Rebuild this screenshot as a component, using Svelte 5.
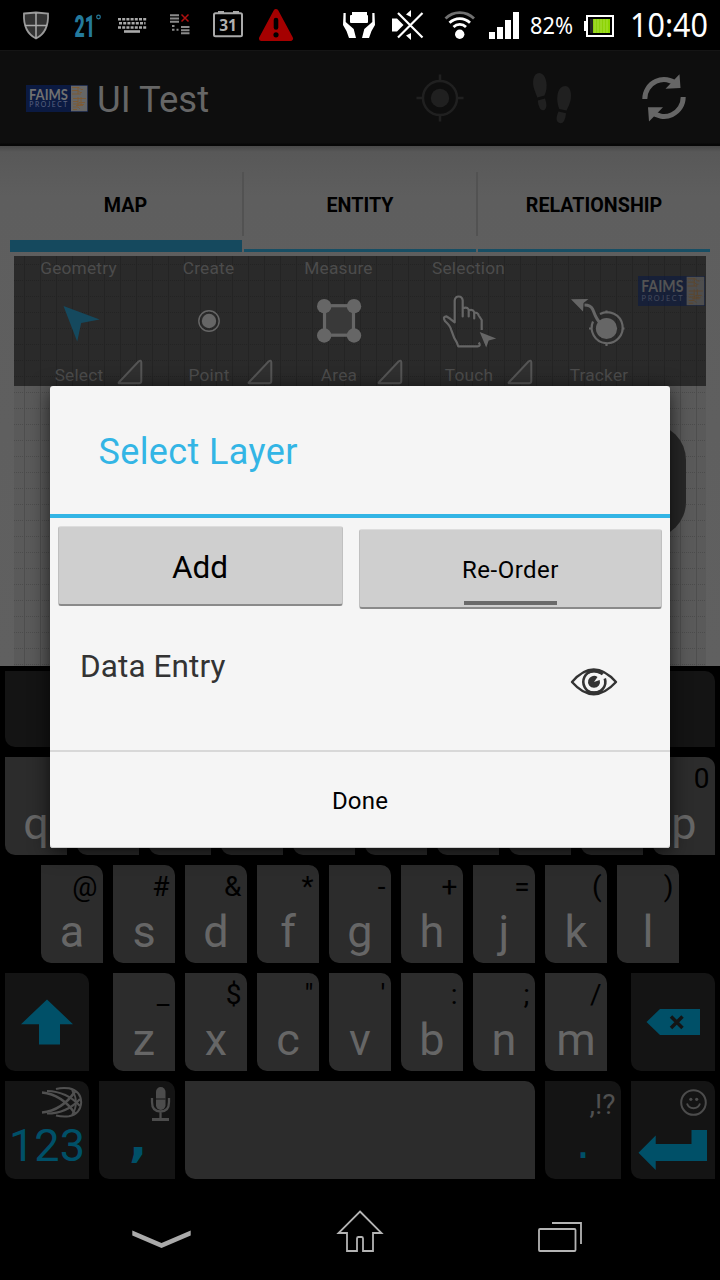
<script>
  const tabs = ['MAP', 'ENTITY', 'RELATIONSHIP'];
  const tools = [
    { top: 'Geometry', label: 'Select', icon: 'select', more: true },
    { top: 'Create', label: 'Point', icon: 'point', more: true },
    { top: 'Measure', label: 'Area', icon: 'area', more: true },
    { top: 'Selection', label: 'Touch', icon: 'touch', more: true },
    { top: '', label: 'Tracker', icon: 'tracker', more: false }
  ];
  const pair = (letters, hints) => [...letters].map((k, i) => ({ k, h: hints[i] }));
  // The dialog covers the middle of the first row.
  const row1 = pair('q    y   p', '         0');
  const row2 = pair('asdfghjkl', '@#&*-+=()');
  const row3 = pair('zxcvbnm', '_$"\':;/');
</script>

{#snippet logo(w, h)}
  <svg class="logo" width={w} height={h} viewBox="0 0 62 27" preserveAspectRatio="none">
    <rect width="62" height="27" fill="#0b1a42" />
    <rect x="45" y="0.7" width="16.3" height="25.6" fill="#666" />
    <text class="mark" x="3" y="14.8" font-size="15.5" font-weight="700" fill="#707070" textLength="39" lengthAdjust="spacingAndGlyphs">FAIMS</text>
    <text class="mark" x="3.3" y="22.3" font-size="6.8" fill="#5a6280" textLength="38" lengthAdjust="spacing">PROJECT</text>
    <g fill="none" stroke="#80582c" stroke-width="0.8">
      <path d="M46 2.5h7l2 2h2M46 5.5h6l2 2h2M46 9h9M52 2v7M47 13.5h13M52 12v9M55 12v5M47 16.5h5M47 19h9M47 22h5l2 2M47 24.500h4" />
      <path d="M54 19.500h4M53 17.500h6M50 20.500h7" />
    </g>
  </svg>
{/snippet}

{#snippet key(item)}
  <div class="key"><span class="hint">{item.h}</span><span class="letter">{item.k}</span></div>
{/snippet}

<div class="screen">
  <div class="status">
    <svg width="62" height="50" viewBox="0 0 62 50">
      <path d="M24 13.500Q31 13 36 12.500Q42 13 48 13.500Q49 32 36 38.500Q23 32 24 13.500Z" fill="#333" stroke="#9a9a9a" stroke-width="1.8" />
      <path d="M36 13v25M25 25.500h22" stroke="#aaa" stroke-width="1.500" />
    </svg>
    <svg width="48" height="50" viewBox="62 0 48 50">
      <text x="74.500" y="36.800" font-size="30.500" font-weight="900" fill="#247a9c" textLength="20.500" lengthAdjust="spacingAndGlyphs">21</text>
      <circle cx="98.500" cy="17" r="1.800" fill="none" stroke="#247a9c" stroke-width="1.200" />
    </svg>
    <svg width="46" height="50" viewBox="110 0 46 50">
      <g stroke="#aaa" stroke-width="2.600" stroke-dasharray="3 1.200">
        <path d="M118 19.200h28.300M119 23.300h26.500M118 27.500h28.300" />
      </g>
      <path d="M124 31.500h16" stroke="#aaa" stroke-width="2.600" />
    </svg>
    <svg width="44" height="50" viewBox="156 0 44 50">
      <path d="M170 15.200h9M170 18.500h9M170 21.800h9M181 27h8.500M181 30.200h8.500M181 33.300h8.500" stroke="#8a8a8a" stroke-width="2.100" />
      <path d="M172 26h2.500M172 29.700h2.500M176.500 29.700h2" stroke="#8a8a8a" stroke-width="2" />
      <path d="M181.500 14.500l7 7M188.500 14.500l-7 7" stroke="#b01010" stroke-width="1.500" />
    </svg>
    <svg width="52" height="50" viewBox="200 0 52 50">
      <rect x="214" y="13.300" width="28" height="23" rx="1.500" fill="none" stroke="#aaa" stroke-width="2" />
      <path d="M218 12h6M233 12h6" stroke="#aaa" stroke-width="1.800" />
      <text class="sony" x="228" y="31" text-anchor="middle" font-size="15.500" font-weight="700" fill="#b0b0b0">31</text>
    </svg>
    <svg width="78" height="50" viewBox="252 0 78 50">
      <path d="M276 11.500L290.500 38.500H261.500Z" fill="#a50000" stroke="#a50000" stroke-width="5" stroke-linejoin="round" />
      <path d="M276 20v7.500" stroke="#000" stroke-width="4.600" stroke-linecap="round" />
      <circle cx="276" cy="34.800" r="2.600" />
    </svg>
    <svg width="54" height="50" viewBox="330 0 54 50" fill="#fff">
      <path d="M343.500 13h2.200v9l8 7 2.300 9h-7l-2.500-7-3.500-6zM374.500 13h-2.200v9l-8 7-2.300 9h7l2.500-7 3.500-6z" />
      <rect x="350" y="15" width="18" height="8" rx="1" />
      <rect x="352" y="12" width="15" height="3" />
    </svg>
    <svg width="52" height="50" viewBox="384 0 52 50">
      <path d="M392 18.500h5v13h-5zM397 18.500l6.500 6.500-6.500 6.500zM406 14.500l5-4.500v7zM406 35.500l5 4.500v-7z" fill="#fff" />
      <path d="M399 13.500l23.500 23.500M422.500 13L398 37.500" stroke="#000" stroke-width="3.800" />
      <path d="M398 13l24.500 24.500M422.500 13L398 37.500" stroke="#fff" stroke-width="2.200" />
    </svg>
    <svg width="48" height="50" viewBox="436 0 48 50">
      <circle cx="459.700" cy="34.300" r="4.700" fill="#fff" />
      <g fill="none" stroke-width="2.700">
        <path d="M445.500 18.500a20 20 0 0 1 28.500 0" stroke="#707070" />
        <path d="M449.500 22.800a14.500 14.500 0 0 1 20.500 0M453.500 27a8.800 8.800 0 0 1 12.500 0" stroke="#fff" />
      </g>
    </svg>
    <svg width="44" height="50" viewBox="484 0 44 50" fill="#fff">
      <path d="M489 32h6v7h-6zM497 27h6v12h-6zM505 20h6v19h-6zM513 12h6v27h-6z" />
    </svg>
    <svg width="50" height="50" viewBox="528 0 50 50">
      <text class="sony" x="530" y="34" font-size="23" fill="#fff" textLength="43" lengthAdjust="spacingAndGlyphs">82%</text>
    </svg>
    <svg width="48" height="50" viewBox="578 0 48 50">
      <defs>
        <linearGradient id="charge"><stop offset="0" stop-color="#222" /><stop offset="0.15" stop-color="#222" /><stop offset="0.150" stop-color="#8ccc10" /><stop offset="1" stop-color="#8cd600" /></linearGradient>
      </defs>
      <rect x="587" y="16" width="26" height="20" fill="none" stroke="#fff" stroke-width="2" />
      <path d="M584 21h3v10h-3z" fill="#fff" />
      <rect x="590" y="19" width="20" height="14" fill="url(#charge)" />
      <path d="M595 19v14M598 19v14M601 19v14M604 19v14M607 19v14" stroke="#b8ea50" stroke-width=".7" />
    </svg>
    <svg width="94" height="50" viewBox="626 0 94 50">
      <text class="sony" x="630" y="37" font-size="32.500" fill="#fff" textLength="78" lengthAdjust="spacingAndGlyphs">10:40</text>
    </svg>
  </div>

  <header>
    {@render logo(62, 27)}
    <h1>UI Test</h1>
    <svg width="320" height="96" viewBox="400 50 320 96">
      <g fill="none" stroke="#202020" stroke-width="2.500">
        <circle cx="440" cy="98" r="17" />
        <path d="M440 74.500v7M440 114.500v7M416.500 98h7M456.500 98h7" />
      </g>
      <circle cx="440" cy="98" r="9.200" fill="#202020" />
      <g fill="#202020">
        <path d="M539 73C533.500 73 531.500 82 534.500 90Q536 94 537.300 97.500L544.500 95.500Q547.500 89 546.300 82C545.300 76.500 543 73 539 73Z" />
        <path d="M537.800 100.500l7.200-2q3 9-.5 11.500c-4 1.500-6-3-6.700-9.500Z" />
        <path d="M565.500 86c5 0 6.500 8.500 5 14.500Q569.500 105 566.500 110.500L559.300 109Q556.500 102 557.500 95C558.500 89 561.500 86 565.500 86Z" />
        <path d="M558.500 111.500l7.500 1.700q-1 10-5.500 10c-4.500-.5-5-5-2-11.700Z" />
      </g>
      <g fill="none" stroke="#666" stroke-width="5">
        <path d="M644.800 99a19.200 19.200 0 0 1 32-14.500" />
        <path d="M683.200 97a19.200 19.200 0 0 1-32 14.500" />
      </g>
      <path d="M679.500 74.200L680.500 88 665.500 88.800ZM648 107.300L663 107.200 649 121.500Z" fill="#666" />
    </svg>
  </header>

  <main>
    <nav class="tabs">
      {#each tabs as tab, i}
        <div class="tab" class:active={i === 0}>{tab}</div>
      {/each}
    </nav>
    <section class="map">
      <div class="toolbar">
        {#each tools as t}
          <div class="tool">
            <span>{t.top}</span>
            <svg class="glyph" width="130" height="74" viewBox="0 0 130 74">
              {#if t.icon === 'select'}
                <path d="M49.500 25L85.700 38.500 67.200 42 63.200 60.500Z" fill="#15495e" />
              {:else if t.icon === 'point'}
                <circle cx="65" cy="40" r="10.200" fill="none" stroke="#666" stroke-width="1.400" />
                <circle cx="65" cy="40" r="7.200" fill="#666" />
              {:else if t.icon === 'area'}
                <g transform="translate(0 -.8)">
                  <rect x="50.500" y="25.500" width="29" height="29.500" fill="#393939" stroke="#666" stroke-width="3.200" />
                  <g fill="#666"><circle cx="50.200" cy="26" r="7.200" /><circle cx="80" cy="26" r="7.200" /><circle cx="50.200" cy="55.300" r="7.200" /><circle cx="80" cy="55.300" r="7.200" /></g>
                </g>
              {:else if t.icon === 'touch'}
                <g transform="translate(-3.300 -.5)">
                  <path d="M78 62q2.500 3.500-1 3.800H57.500q-1-4-4-8.500l-3-8q-1-4-6-8.500-3-4.500 1-5l4 2.500 4.500 3.500V20q.5-4 4-4t4 4v16V28q4-2 6 1v7V30q4-1.500 5.500 1.500V38V32q4 0 4.500 3l3 4.500v10" fill="none" stroke="#666" stroke-width="2.200" stroke-linejoin="round" />
                  <path d="M79 51.500l16.500 6.500-7.500 2-2.500 7Z" fill="#666" />
                </g>
              {:else}
                <g transform="translate(-4 0)">
                  <path d="M41 18.300L58.500 18 53.500 22 53 30.500Z" fill="#666" />
                  <path d="M54.500 24q6 0 8 4l3 7q3 6 6 8" fill="none" stroke="#666" stroke-width="3" />
                  <circle cx="76.500" cy="47.500" r="10.600" fill="#666" />
                  <path d="M70 33a15.500 15.500 0 1 1-7 7.500M76.500 29.500v3M76.500 62v3M59 47.500h3M91.500 47.500h3" fill="none" stroke="#666" stroke-width="2.200" />
                </g>
              {/if}
            </svg>
            <div class="foot">
              <span>{t.label}</span>
              {#if t.more}
                <svg class="more" width="26" height="27" viewBox="0 0 26 27"><path d="M2 24.300L21.500 3.500Q24.300 1.500 24.300 4.500V23Q24.300 25.300 22 25.300H3Q.8 25.300 2 24.300Z" fill="#303030" stroke="#555" stroke-width="2" /></svg>
              {/if}
            </div>
          </div>
        {/each}
        <div class="watermark">{@render logo(67, 30)}</div>
      </div>
      <div class="control"></div>
    </section>
  </main>

  <section class="keyboard">
    <div class="suggest"></div>
    <div class="row">{#each row1 as item}{@render key(item)}{/each}</div>
    <div class="row">{#each row2 as item}{@render key(item)}{/each}</div>
    <div class="row split">
      <div class="key dark wide">
        <svg width="84" height="98" viewBox="5 973 84 98"><path d="M47 999.500L73 1024.200H60V1044.500H39V1024.200H21Z" fill="#005068" /></svg>
      </div>
      <div class="row">{#each row3 as item}{@render key(item)}{/each}</div>
      <div class="key dark wide">
        <svg width="84" height="98" viewBox="631 973 84 98"><path d="M646.500 1022L660 1009H700V1035H660Z" fill="#005068" /><path d="M671 1016.500l11.500 11.500M682.500 1016.500L671 1028" stroke="#141414" stroke-width="3.500" /></svg>
      </div>
    </div>
    <div class="row">
      <div class="key dark wide">
        <svg width="84" height="43" viewBox="5 1081 84 43" fill="none" stroke="#505050">
          <path d="M56 1089Q62 1087.300 69 1088.300Q81 1091 81.200 1102.500Q80.500 1114 69 1116.300Q62 1117 56 1115.500" stroke-width="2" />
          <path d="M42 1092.500Q62 1094.500 75 1113.500M42 1112.500Q62 1110.500 75 1091.500" stroke-width="2.600" />
          <path d="M47 1091Q67 1091.500 80 1106M47 1113.500Q67 1113.500 80 1099" stroke-width="2.200" />
          <path d="M72 1090Q80 1102.500 72 1115" stroke-width="1.800" />
        </svg>
        <span class="letter blue num">123</span>
      </div>
      <div class="key dark mid">
        <svg width="76" height="43" viewBox="99 1081 76 43">
          <rect x="156" y="1087" width="9.500" height="23" rx="4.700" fill="#4c4c4c" />
          <path d="M152 1098v4q0 9.500 8.500 9.500t8.500-9.500v-4M160.500 1112v6" fill="none" stroke="#4c4c4c" stroke-width="2.300" />
          <path d="M156 1099h9.500" stroke="#141414" stroke-width="1" />
          <path d="M152 1119.500h17" stroke="#4c4c4c" stroke-width="3" />
        </svg>
        <span class="letter blue comma">,</span>
      </div>
      <div class="key space"></div>
      <div class="key dark mid"><span class="hint soft">,!?</span><span class="letter blue period">.</span></div>
      <div class="key dark wide">
        <svg width="84" height="98" viewBox="631 1081 84 98">
          <circle cx="693.500" cy="1102.500" r="12.300" fill="none" stroke="#4c4c4c" stroke-width="2" />
          <circle cx="690.800" cy="1099.300" r="1.600" fill="#4c4c4c" /><circle cx="696.700" cy="1099.300" r="1.600" fill="#4c4c4c" />
          <path d="M687 1103.500q1.500 4.700 6.500 4.700t6.500-4.700" fill="none" stroke="#4c4c4c" stroke-width="1.900" />
          <path d="M638.500 1152.700L655.700 1135.500V1144H691.500V1130H707V1161H655.700V1170Z" fill="#005068" />
        </svg>
      </div>
    </div>
  </section>

  <footer>
    <svg width="720" height="90" viewBox="0 1190 720 90">
      <path d="M132.300 1230.500L161.500 1243 190.700 1230.500V1235.500L161.500 1248 132.300 1235.500Z" fill="#aaa" />
      <g fill="none" stroke="#b4b4b4" stroke-width="1.800">
        <path d="M360 1211.500L381.500 1233H373V1251H363V1238.500Q363 1237 361.500 1237H358.500Q357 1237 357 1238.500V1251H347V1233H338.500Z" />
        <rect x="539" y="1229" width="36.500" height="22" rx="1" />
        <path d="M552 1223H581V1244" />
      </g>
    </svg>
  </footer>

  <div class="dialog" role="dialog" aria-label="Select Layer">
    <h2>Select Layer</h2>
    <div class="actions">
      <button class="add">Add</button>
      <button class="reorder">Re-Order</button>
    </div>
    <div class="layer">
      <span>Data Entry</span>
      <svg width="48" height="28" viewBox="570 668 48 28">
        <path d="M572 682Q593.500 657 616 682Q593.500 706.500 572 682Z" fill="none" stroke="#333" stroke-width="2.400" stroke-linejoin="round" />
        <path d="M602.500 674.500a11 11 0 1 0 2.300 4" fill="none" stroke="#333" stroke-width="2.600" />
        <path d="M585 671q9-3.500 18 0l-3 3q-6-3-12 0zM585 692.500q9 3.500 18 0l-3-2.500q-6 2.500-12 0z" fill="#333" />
        <path d="M594 682L599.700 680A6 6 0 1 1 597.500 677Z" fill="#333" />
      </svg>
    </div>
    <div class="done">Done</div>
  </div>
</div>

<style>
  :global(body) { background: #000; }
  .screen {
    position: relative; width: 720px; height: 1280px; overflow: hidden;
    display: flex; flex-direction: column; background: #000;
    font-family: Roboto, "Liberation Sans", sans-serif;
  }
  svg { display: block; flex: none; }
  .status { display: flex; height: 50px; flex: none; }
  .sony { font-family: "Noto Sans", "Open Sans", sans-serif; }
  .mark { font-family: Lato, Roboto, sans-serif; }
  header {
    height: 96px; flex: none; box-sizing: border-box; display: flex; align-items: center;
    padding-left: 26px; background: linear-gradient(#151515 0 1px, #0e0e0e 1px 93px, #070707 94px);
  }
  h1 { margin: 0 0 0 9px; flex: 1; font-size: 36.5px; font-weight: 400; color: #666; line-height: 96px; padding-top: 4px; }
  header .logo { margin-top: 1px; }
  main {
    height: 520px; flex: none; display: flex; flex-direction: column;
    background: linear-gradient(#484848, #585858 6px, #5e5e5e 50px, #606060);
  }
  .tabs { display: flex; gap: 2px; padding: 0 10px; height: 106px; flex: none; }
  .tab {
    width: 232px; box-sizing: border-box; display: flex; align-items: center; justify-content: center;
    padding-top: 16px; font-size: 19.7px; font-weight: 700; color: #000; border-bottom: 3px solid #174e64; position: relative;
  }
  .tab.active { border-bottom: 12px solid #15495e; padding-top: 25px; padding-right: 1px; }
  .tab + .tab::before { content: ""; position: absolute; left: -2px; top: 26px; width: 2px; height: 64px; background: #525252; }
  .map {
    position: relative; margin: 4px 14px 0; flex: 1; background-color: #5a5a5a;
    background-image: url("data:image/svg+xml,%3Csvg xmlns='http://www.w3.org/2000/svg' width='16' height='16'%3E%3Cpath d='M10.5 0v16' stroke='%234e4e4e'/%3E%3Cpath d='M0 8.500h16' stroke='%234c4c4c' stroke-dasharray='1 1'/%3E%3C/svg%3E");
  }
  .toolbar { position: relative; display: flex; height: 130px; background: rgba(0, 0, 0, .53); }
  .tool { width: 130px; flex: none; display: flex; flex-direction: column; align-items: center; font-size: 17.3px; letter-spacing: .2px; color: #4c4c4c; }
  .tool > span { height: 25px; line-height: 25px; margin-right: 1px; }
  .foot { position: relative; line-height: 25px; height: 31px; width: 130px; text-align: center; padding-top: 8px; box-sizing: border-box; }
  .more { position: absolute; left: 103px; top: 3px; }
  .watermark { position: absolute; left: 624px; top: 20px; opacity: .6; }
  .control { position: absolute; left: 572px; top: 168px; width: 100px; height: 114px; border-radius: 36px; background: #272727; }

  .keyboard { height: 524px; flex: none; box-sizing: border-box; padding: 5px; display: flex; flex-direction: column; gap: 10px; }
  .suggest { height: 76px; background: #141414; border-radius: 0 10px; }
  .row { display: flex; gap: 10px; justify-content: center; }
  .row.split { justify-content: space-between; }
  .key { width: 62px; height: 98px; flex: none; display: flex; flex-direction: column; background: #2c2c2c; border-radius: 0 10px; color: #666; }
  .hint { height: 43px; line-height: 43px; padding-right: 5.5px; text-align: right; font-size: 28px; color: #000; }
  .letter { height: 47px; line-height: 47px; text-align: center; font-size: 45px; }
  .dark { background: #141414; }
  .wide { width: 84px; }
  .mid { width: 76px; }
  .space { width: 350px; }
  .blue { color: #005068; }
  .num { line-height: 44px; }
  .comma { font: 700 48px/30px "DejaVu Sans", sans-serif; height: 47px; padding-left: 2px; }
  .period { font: 400 46px/36px "DejaVu Sans", sans-serif; height: 47px; }
  .soft { color: #505050; line-height: 48px; }
  footer { height: 90px; }

  .dialog {
    position: absolute; left: 50px; top: 386px; width: 620px; height: 462px;
    display: flex; flex-direction: column; background: #f5f5f5; border-radius: 3px;
    box-shadow: 0 4px 20px rgba(0, 0, 0, .7), inset 0 -1px 0 #ccc;
  }
  h2 { margin: 0; height: 128px; line-height: 133px; padding-left: 48.5px; border-bottom: 4px solid #33b5e5; font-size: 36px; font-weight: 400; letter-spacing: .38px; color: #33b5e5; }
  .actions { display: flex; justify-content: space-between; padding: 8px; height: 83px; }
  button {
    height: 80px; padding: 0; border: 1px solid #c0c0c0; border-top-color: #ddd; border-bottom: 2px solid #8a8a8a;
    border-radius: 3px; background: #cfcfcf; font-family: inherit; color: #000;
  }
  .add { width: 285px; font-size: 31.5px; padding-top: 4px; padding-right: 1px; }
  .reorder { position: relative; width: 303px; margin-top: 3px; font-size: 24px; letter-spacing: .5px; padding-top: 2px; }
  .reorder::after { content: ""; position: absolute; left: 104px; bottom: 2px; width: 93px; height: 4px; background: #6a6a6a; }
  .layer { flex: 1; display: flex; justify-content: space-between; padding: 32px 52px 0 30px; font-size: 31.5px; letter-spacing: .1px; line-height: 36px; color: #333; border-bottom: 2px solid #d8d8d8; }
  .layer svg { margin-top: 19px; }
  .done { height: 96px; line-height: 99px; text-align: center; font-size: 24px; letter-spacing: .2px; color: #000; }
</style>
